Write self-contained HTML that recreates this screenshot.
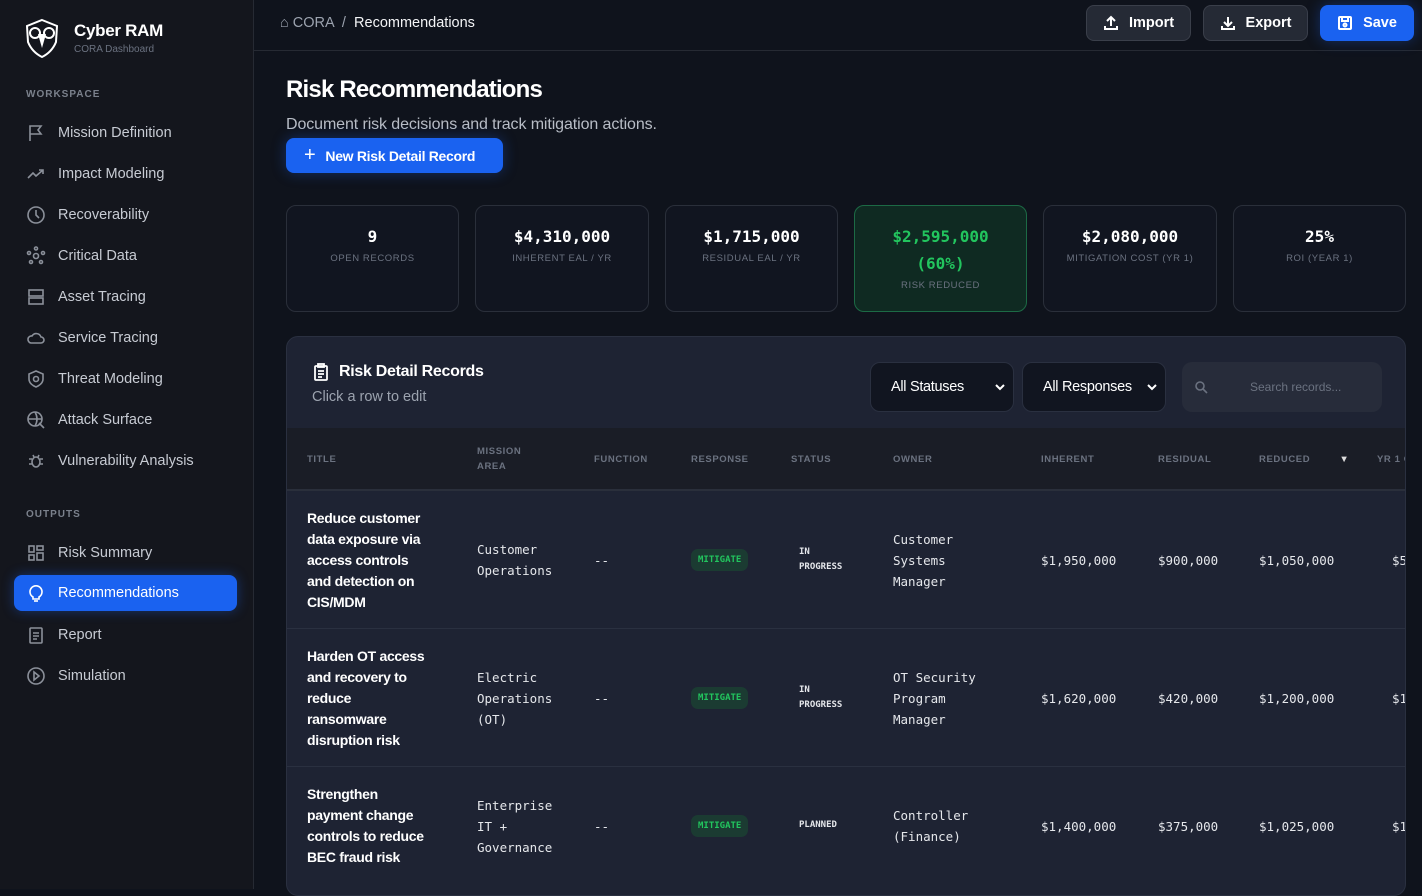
<!DOCTYPE html>
<html><head><meta charset="utf-8"><style>
*{box-sizing:border-box;margin:0;padding:0}
body{width:1422px;height:889px;overflow:hidden;background:#0f131c;font-family:"Liberation Sans",sans-serif;color:#e5e7eb;position:relative}
.sb{position:absolute;left:0;top:0;width:254px;height:889px;background:#14161d;border-right:1px solid #262a33}
.logo{position:absolute;left:24px;top:18px}
.brand{position:absolute;left:74px;top:21px;font-weight:bold;font-size:17px;color:#fff;letter-spacing:-.3px}
.sub{position:absolute;left:74px;top:44px;font-size:10px;color:#6b7280}
.sec{position:absolute;left:26px;font-size:10px;letter-spacing:1px;color:#7b818c;font-weight:bold}
.ni{position:absolute;left:14px;width:223px;height:36px;display:flex;align-items:center;padding-left:12px;font-size:14.5px;color:#c7cbd3}
.ni svg{width:20px;height:20px;margin-right:12px;stroke:#8b909a;fill:none;stroke-width:1.6}
.ni.act{background:#1a62f0;color:#fff;border-radius:8px;box-shadow:0 0 12px rgba(30,100,240,.4)}
.ni.act svg{stroke:#fff}
.top{position:absolute;left:254px;top:0;right:0;height:51px;border-bottom:1px solid #262a33}
.crumb{position:absolute;left:280px;top:15px;font-size:14.5px;color:#9ca3af}
.crumb b{color:#f3f4f6;font-weight:normal}
.btn{position:absolute;top:5px;height:36px;border-radius:8px;display:flex;align-items:center;justify-content:center;font-weight:bold;font-size:14.5px;color:#fff;gap:10px}
.btn svg{width:16px;height:16px;fill:none;stroke:#fff;stroke-width:2}
.g{background:#252a35;border:1px solid #3a3f4a}
.h1{position:absolute;left:286px;top:76px;font-size:24px;font-weight:bold;color:#fff;letter-spacing:-.8px}
.desc{position:absolute;left:286px;top:116px;font-size:16px;color:#b8bdc6;letter-spacing:-.1px}
.nb{position:absolute;left:286px;top:138px;width:217px;height:35px;background:#1a62f0;border-radius:8px;font-weight:bold;font-size:14px;color:#fff;display:flex;align-items:center;padding-left:18px;gap:10px;box-shadow:0 0 14px rgba(30,100,240,.35);letter-spacing:-.3px}
.card{position:absolute;top:205px;height:107px;border:1px solid #2a2f3a;border-radius:10px;background:#111520;text-align:center;padding-top:17px}
.card .v{font-family:"DejaVu Sans Mono","Liberation Mono",monospace;font-weight:bold;font-size:16px;color:#fff;line-height:27px}
.card .l{font-size:9.5px;letter-spacing:.6px;color:#6b7280;margin-top:3px}
.card.gr{background:#0f2a22;border-color:#1c6a45}
.card.gr .v{color:#22c55e}
.panel{position:absolute;left:286px;top:336px;width:1120px;height:560px;background:#1e2333;border:1px solid #2a3040;border-radius:12px;overflow:hidden}
.pt{position:absolute;left:52px;top:26px;font-weight:bold;font-size:16px;color:#fff;letter-spacing:-.3px}
.ps{position:absolute;left:25px;top:52px;font-size:14.5px;color:#9ca3af}
.sel{position:absolute;top:25px;height:50px;background:#111520;border:1px solid #2a3040;border-radius:10px;font-size:14.5px;color:#fff;display:flex;align-items:center;padding-left:20px;overflow:hidden;white-space:nowrap;letter-spacing:-.3px}
.sel svg{position:absolute;right:8px;top:20px}
.search{position:absolute;left:895px;top:25px;width:200px;height:50px;background:#272c3a;border-radius:10px;font-size:12px;color:#6b7280;display:flex;align-items:center;padding-left:68px}
.th{position:absolute;left:0;top:91px;width:1120px;height:63px;background:#1a1d26;border-bottom:2px solid #2a2f3b}
.th div{position:absolute;font-size:9.5px;font-weight:bold;letter-spacing:.6px;color:#6b7280;line-height:15px;white-space:nowrap}
.row{position:absolute;left:0;width:1120px;height:138px;border-bottom:1px solid #2a3040}
.row div{position:absolute}
.t{left:20px;width:160px;font-weight:bold;font-size:14px;line-height:21px;color:#fff;letter-spacing:-.3px;white-space:nowrap}
.m{font-family:"DejaVu Sans Mono","Liberation Mono",monospace;font-size:12.5px;line-height:21px;color:#e5e7eb;white-space:nowrap}
.pill{background:#1b3b32;color:#22c55e;font-family:"DejaVu Sans Mono",monospace;font-size:9px;font-weight:bold;padding:6px 7px;border-radius:7px}
.st{font-family:"DejaVu Sans Mono",monospace;font-size:9px;font-weight:bold;line-height:15px;color:#e5e7eb}
</style></head><body>
<div class="sb">
<svg class="logo" width="36" height="40" viewBox="0 0 36 40"><path d="M18 2 L33 8 L32 24 Q28 34 18 39 Q8 34 4 24 L3 8 Z" fill="none" stroke="#fff" stroke-width="2"/><circle cx="11" cy="15" r="5" fill="none" stroke="#fff" stroke-width="2"/><circle cx="25" cy="15" r="5" fill="none" stroke="#fff" stroke-width="2"/><path d="M14 16 L18 30 L22 16 Z" fill="#fff"/></svg>
<div class="brand">Cyber RAM</div><div class="sub">CORA Dashboard</div>
<div class="sec" style="top:89px">WORKSPACE</div>
<div class="ni" style="top:115px"><svg viewBox="0 0 20 20"><path d="M4 18V3h11l-3 4 3 4H4"/></svg>Mission Definition</div>
<div class="ni" style="top:156px"><svg viewBox="0 0 20 20"><path d="M2 14l5-5 3 3 7-6M13 6h4v4"/></svg>Impact Modeling</div>
<div class="ni" style="top:197px"><svg viewBox="0 0 20 20"><circle cx="10" cy="10" r="8"/><path d="M10 5v5l3 3"/></svg>Recoverability</div>
<div class="ni" style="top:238px"><svg viewBox="0 0 20 20"><circle cx="10" cy="10" r="2.5"/><circle cx="10" cy="2.5" r="1.5"/><circle cx="3" cy="7" r="1.5"/><circle cx="17" cy="7" r="1.5"/><circle cx="5" cy="16" r="1.5"/><circle cx="15" cy="16" r="1.5"/></svg>Critical Data</div>
<div class="ni" style="top:279px"><svg viewBox="0 0 20 20"><rect x="3" y="3" width="14" height="6"/><rect x="3" y="11" width="14" height="6"/></svg>Asset Tracing</div>
<div class="ni" style="top:320px"><svg viewBox="0 0 20 20"><path d="M5 15h10a3 3 0 0 0 0-6 5 5 0 0 0-9-1 3.5 3.5 0 0 0-1 7z"/></svg>Service Tracing</div>
<div class="ni" style="top:361px"><svg viewBox="0 0 20 20"><path d="M10 2l7 3v5q0 5-7 8-7-3-7-8V5z"/><circle cx="10" cy="10" r="2.5"/></svg>Threat Modeling</div>
<div class="ni" style="top:402px"><svg viewBox="0 0 20 20"><circle cx="9" cy="9" r="7"/><path d="M2 9h14M9 2q4 7 0 14M13 13l5 5"/></svg>Attack Surface</div>
<div class="ni" style="top:443px"><svg viewBox="0 0 20 20"><ellipse cx="10" cy="11" rx="4" ry="5"/><path d="M3 8h3M14 8h3M3 13h3M14 13h3M7 4l1 2M13 4l-1 2"/></svg>Vulnerability Analysis</div>
<div class="sec" style="top:509px">OUTPUTS</div>
<div class="ni" style="top:535px"><svg viewBox="0 0 20 20"><rect x="3" y="3" width="5" height="6"/><rect x="11" y="3" width="6" height="4"/><rect x="3" y="12" width="5" height="5"/><rect x="11" y="10" width="6" height="7"/></svg>Risk Summary</div>
<div class="ni act" style="top:575px"><svg viewBox="0 0 20 20"><path d="M7 14a6 6 0 1 1 6 0v2H7z"/><path d="M8 18h4"/></svg>Recommendations</div>
<div class="ni" style="top:617px"><svg viewBox="0 0 20 20"><rect x="4" y="3" width="12" height="15" rx="1"/><path d="M7 8h6M7 11h6M7 14h4"/></svg>Report</div>
<div class="ni" style="top:658px"><svg viewBox="0 0 20 20"><circle cx="10" cy="10" r="8"/><path d="M8 6l5 4-5 4z"/></svg>Simulation</div>
</div>
<div class="top"></div>
<div class="crumb">⌂ CORA &nbsp;/&nbsp; <b>Recommendations</b></div>
<div class="btn g" style="left:1086px;width:105px"><svg viewBox="0 0 16 16"><path d="M8 11V2M4 6l4-4 4 4M2 11v3h12v-3"/></svg>Import</div>
<div class="btn g" style="left:1203px;width:105px"><svg viewBox="0 0 16 16"><path d="M8 2v9M4 7l4 4 4-4M2 11v3h12v-3"/></svg>Export</div>
<div class="btn" style="left:1320px;width:94px;background:#1a62f0;box-shadow:0 0 14px rgba(30,100,240,.35)"><svg viewBox="0 0 16 16"><rect x="2" y="2" width="12" height="12" rx="1"/><path d="M5 2v4h6V2"/><circle cx="8" cy="10" r="1.5"/></svg>Save</div>
<div class="h1">Risk Recommendations</div>
<div class="desc">Document risk decisions and track mitigation actions.</div>
<div class="nb"><span style="font-size:20px;font-weight:normal">+</span>New Risk Detail Record</div>
<div class="card" style="left:286px;width:173px"><div class="v">9</div><div class="l">OPEN RECORDS</div></div>
<div class="card" style="left:475px;width:174px"><div class="v">$4,310,000</div><div class="l">INHERENT EAL / YR</div></div>
<div class="card" style="left:665px;width:173px"><div class="v">$1,715,000</div><div class="l">RESIDUAL EAL / YR</div></div>
<div class="card gr" style="left:854px;width:173px"><div class="v">$2,595,000<br>(60%)</div><div class="l">RISK REDUCED</div></div>
<div class="card" style="left:1043px;width:174px"><div class="v">$2,080,000</div><div class="l">MITIGATION COST (YR 1)</div></div>
<div class="card" style="left:1233px;width:173px"><div class="v">25%</div><div class="l">ROI (YEAR 1)</div></div>
<div class="panel">
<svg style="position:absolute;left:26px;top:26px" width="16" height="18" viewBox="0 0 16 18" fill="none" stroke="#fff" stroke-width="1.8"><rect x="2" y="3" width="12" height="14" rx="1"/><rect x="5" y="1" width="6" height="3"/><path d="M5 8h6M5 11h6M5 14h4"/></svg>
<div class="pt">Risk Detail Records</div><div class="ps">Click a row to edit</div>
<div class="sel" style="left:583px;width:144px">All Statuses<svg width="10" height="8" viewBox="0 0 10 8"><path d="M1 2l4 4 4-4" fill="none" stroke="#fff" stroke-width="2"/></svg></div>
<div class="sel" style="left:735px;width:144px"><span style="display:inline-block;width:92px;overflow:hidden">All Responses</span><svg width="10" height="8" viewBox="0 0 10 8"><path d="M1 2l4 4 4-4" fill="none" stroke="#fff" stroke-width="2"/></svg></div>
<div class="search"><svg style="position:absolute;left:12px" width="14" height="14" viewBox="0 0 14 14" fill="none" stroke="#6b7280" stroke-width="1.6"><circle cx="6" cy="6" r="4"/><path d="M9 9l4 4"/></svg>Search records...</div>
<div class="th">
<div style="left:20px;top:24px">TITLE</div><div style="left:190px;top:16px">MISSION<br>AREA</div><div style="left:307px;top:24px">FUNCTION</div><div style="left:404px;top:24px">RESPONSE</div><div style="left:504px;top:24px">STATUS</div><div style="left:606px;top:24px">OWNER</div><div style="left:754px;top:24px">INHERENT</div><div style="left:871px;top:24px">RESIDUAL</div><div style="left:972px;top:24px">REDUCED <span style="margin-left:26px;color:#ddd">▼</span></div><div style="left:1090px;top:24px">YR 1 C</div>
</div>
<div class="row" style="top:154px">
<div class="t" style="top:17px">Reduce customer<br>data exposure via<br>access controls<br>and detection on<br>CIS/MDM</div>
<div class="m" style="left:190px;top:48px">Customer<br>Operations</div><div class="m" style="left:307px;top:59px">--</div>
<div class="pill" style="left:404px;top:58px">MITIGATE</div><div class="st" style="left:512px;top:54px">IN<br>PROGRESS</div>
<div class="m" style="left:606px;top:38px">Customer<br>Systems<br>Manager</div>
<div class="m" style="left:754px;top:59px">$1,950,000</div><div class="m" style="left:871px;top:59px">$900,000</div><div class="m" style="left:972px;top:59px">$1,050,000</div><div class="m" style="left:1105px;top:59px">$5</div>
</div>
<div class="row" style="top:292px">
<div class="t" style="top:17px">Harden OT access<br>and recovery to<br>reduce<br>ransomware<br>disruption risk</div>
<div class="m" style="left:190px;top:38px">Electric<br>Operations<br>(OT)</div><div class="m" style="left:307px;top:59px">--</div>
<div class="pill" style="left:404px;top:58px">MITIGATE</div><div class="st" style="left:512px;top:54px">IN<br>PROGRESS</div>
<div class="m" style="left:606px;top:38px">OT Security<br>Program<br>Manager</div>
<div class="m" style="left:754px;top:59px">$1,620,000</div><div class="m" style="left:871px;top:59px">$420,000</div><div class="m" style="left:972px;top:59px">$1,200,000</div><div class="m" style="left:1105px;top:59px">$1,2</div>
</div>
<div class="row" style="top:430px;border:none">
<div class="t" style="top:17px">Strengthen<br>payment change<br>controls to reduce<br>BEC fraud risk</div>
<div class="m" style="left:190px;top:28px">Enterprise<br>IT +<br>Governance</div><div class="m" style="left:307px;top:49px">--</div>
<div class="pill" style="left:404px;top:48px">MITIGATE</div><div class="st" style="left:512px;top:51px">PLANNED</div>
<div class="m" style="left:606px;top:38px">Controller<br>(Finance)</div>
<div class="m" style="left:754px;top:49px">$1,400,000</div><div class="m" style="left:871px;top:49px">$375,000</div><div class="m" style="left:972px;top:49px">$1,025,000</div><div class="m" style="left:1105px;top:49px">$1</div>
</div>
</div>
</body></html>
